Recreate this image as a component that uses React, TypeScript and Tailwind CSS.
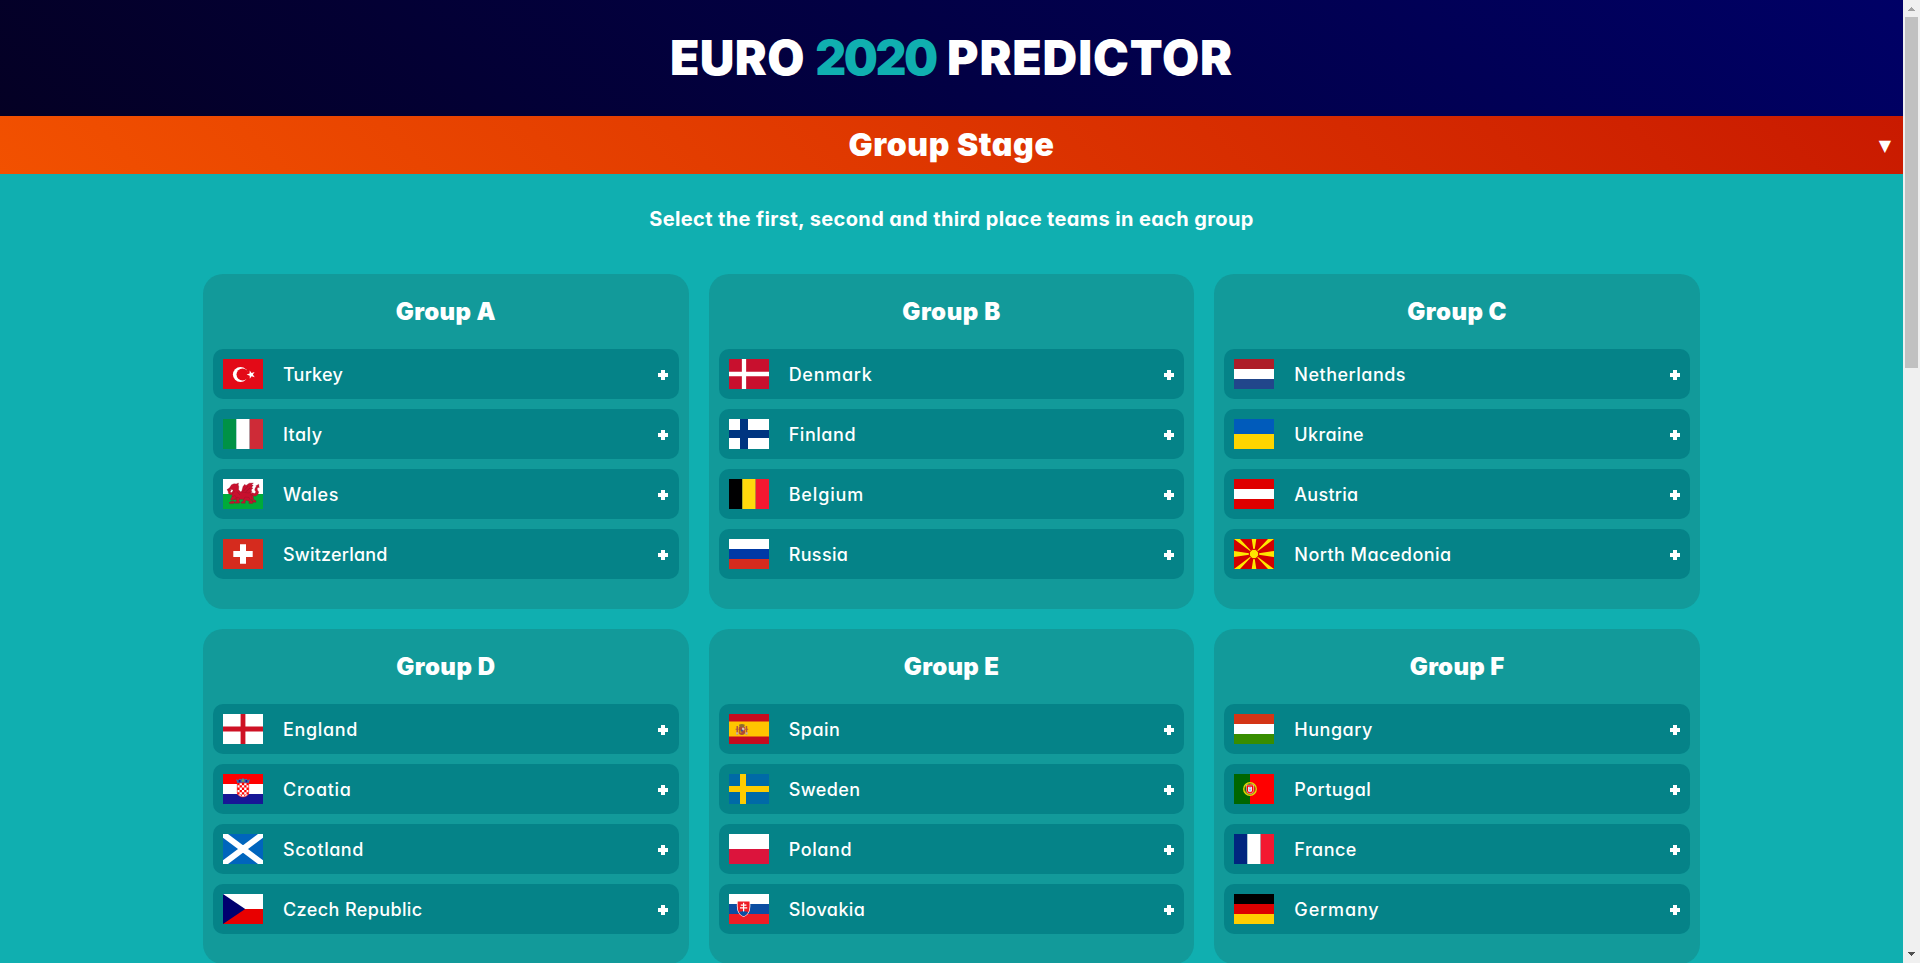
import type { ReactNode } from "react";

type Team = { name: string; tracking: string; flag: ReactNode };
type Group = { name: string; tracking: string; teams: Team[] };

const bandsH = (...colors: string[]) =>
  colors.map((c, i) => (
    <rect key={i} x="0" y={(30 / colors.length) * i} width="40" height={30 / colors.length} fill={c} />
  ));

const bandsV = (...colors: string[]) =>
  colors.map((c, i) => (
    <rect key={i} x={(40 / colors.length) * i} y="0" width={40 / colors.length} height="30" fill={c} />
  ));

const fill = (c: string) => <rect width="40" height="30" fill={c} />;

const turkey = (
  <>
    {fill("#e30a17")}
    <circle cx="17.5" cy="15.5" r="7.6" fill="#fff" />
    <circle cx="19.6" cy="15.5" r="6.1" fill="#e30a17" />
    <path
      fill="#fff"
      d="M23.600 15.600l3-1 .1-3.200 1.900 2.500 3-.9-1.700 2.600 1.800 2.600-3.100-.9-1.800 2.500-.1-3.100z"
    />
  </>
);

const wales = (
  <>
    {fill("#fff")}
    <rect y="15" width="40" height="15" fill="#00ab39" />
    <g fill="#c8102e" stroke="#8a1128" strokeWidth=".3">
      <path d="M8.500 5.800L11 4.700l2.200.2L15.500 4l-.3 2 .6 1.600-.2 3.200 2 1.900 7-1 3.500 1.500 1.500 3 .5 3-3 2.500-3-1-6.500-.5-4 .8-3-.8-1.500-2.500-.3-3 1.300-3-1-1.200-2.200.2-1.600 1.200-.9-1.600 2-1.300z" />
      <path d="M18.500 13l1.500-5.500 1.800-2.200 1.200 1.200 3.200-2.300 4.200-.2-1.800 1.800 1.600.4-1.500 2 1.200 1-1.800 1.800 1 1.500-3.500 1.500z" />
      <path d="M11.500 13l-3.500 3-2.500-1.500-.5-2.500-1-1.500 1.800.3.700-1.500.7 1.800 1 .2-.9 1.400.8 1 2.700-2z" />
      <path d="M12 16.500l-3 1.200-1.500 2.500 1 1 2.200-.6 2.800-1.600z" />
      <path d="M14 18l2.500 1-.5 2.800 1 1.200-.8 1.200H12l-.4-1 2-.9z" />
      <path d="M8 22.500l3-.5.5 1.800-.8.8H6.500l-.3-1z" />
      <path d="M22 18l4 .5 1.500 2.500 2.500 1.500-.3 2H26l-.3-1 1.200-.6-3.400-1.900-1.500 1.700.3 1.500h-4l-.2-1 1.700-.8z" />
      <path d="M27.500 15l2.500 2 .5 3.500 2.500 1.200v1.500h-3l-.3-1z" />
      <path d="M28.500 13.500l3 1 1.500-1.500-1.300-2 .6-2.300 1.200-.9-.8-.8 3-1.800.5 3.500-1-.4-1 1.200.2 1.400 1.300 2-.8 2.600-2.600 1.800-3-.8z" />
    </g>
    <path d="M20.500 12l4.500-5M22.500 13l4.500-4M14 12.500l3 3.500" stroke="#8a1128" strokeWidth=".5" />
  </>
);

const switzerland = (
  <>
    {fill("#d52b1e")}
    <path fill="#fff" d="M17 5.300h6v6.700h6.700v6h-6.700v6.700h-6v-6.700h-6.700v-6h6.700z" />
  </>
);

const denmark = (
  <>
    {fill("#c8102e")}
    <path fill="#fff" d="M12.860 0h4.280v30h-4.280zM0 12.860h40v4.280H0z" />
  </>
);

const finland = (
  <>
    {fill("#fff")}
    <path fill="#003580" d="M11 0h8v30h-8zM0 10.900h40v8.200H0z" />
  </>
);

const macedonia = (
  <>
    {fill("#d20000")}
    <path
      fill="#ffe600"
      d="M0 0h6l14 15zM40 0h-6L20 15zM0 30h6l14-15zM40 30h-6L20 15zM17.700 0h4.600L20 15zM17.700 30h4.600L20 15zM0 12v6l20-3zM40 12v6l-20-3z"
    />
    <circle cx="20" cy="15" r="4.7" fill="#ffe600" stroke="#d20000" strokeWidth="1" />
  </>
);

const england = (
  <>
    {fill("#fff")}
    <path fill="#ce1124" d="M17.600 0h4.800v30h-4.800zM0 12.600h40v4.800H0z" />
  </>
);

const croatia = (
  <>
    {bandsH("#ff0000", "#ffffff", "#171796")}
    <path fill="#fff" stroke="#ff0000" strokeWidth=".6" d="M14.300 9h11.400v9.500a5.700 4.500 0 0 1-11.400 0z" />
    <path
      fill="#ff0000"
      d="M14.300 9h2.300v2.300h-2.300zM18.900 9h2.300v2.300h-2.300zM23.500 9h2.200v2.300h-2.200zM16.600 11.300h2.300v2.300h-2.300zM21.200 11.300h2.300v2.300h-2.300zM14.300 13.600h2.300v2.300h-2.300zM18.900 13.600h2.300v2.300h-2.300zM23.500 13.600h2.200v2.300h-2.200zM16.600 15.900h2.300v2.300h-2.300zM21.200 15.900h2.300v2.300h-2.300zM14.300 18.200h2.300v2.300h-2.100zM18.900 18.200h2.300v2.300h-2.300zM23.500 18.200h2.200l-.2 2.300h-2zM16.800 20.500h2.100v2zM21.200 20.500h2l-2 2z"
    />
    <path fill="#3f6fa8" d="M13 5.300l2.200.7 1.500-1.200 1.700.5L20 4.100l1.600 1.200 1.700-.5 1.500 1.200 2.200-.7-1.300 3.700q-5.700-1.200-11.400 0z" />
    <path fill="#171796" d="M15.700 6h1.800v2.200h-1.800zM22.500 6h1.800v2.200h-1.800z" />
    <path fill="#8aa83a" d="M19.100 5.500h1.800v2h-1.800z" />
  </>
);

const scotland = (
  <>
    {fill("#0065bd")}
    <path stroke="#fff" strokeWidth="6" d="M0 0l40 30M40 0L0 30" />
  </>
);

const czech = (
  <>
    {bandsH("#ffffff", "#e80000")}
    <path fill="#00006f" d="M0 0l22.200 15L0 30z" />
  </>
);

const spain = (
  <>
    {fill("#c60b1e")}
    <rect y="7.5" width="40" height="15" fill="#ffc400" />
    <path fill="#b5533c" d="M7.500 12h1.500v8.500H7.500zM16.700 12h1.500v8.500h-1.500z" />
    <path fill="#c8b1a0" d="M7 18.300h2.400v2.200H7zM16.400 18.300h2.400v2.200h-2.400z" />
    <path fill="#b04a35" d="M9.800 13h6.200v5.300a3.100 2.700 0 0 1-6.200 0z" />
    <path fill="#8d6b2f" d="M10 10.800q2.900-1.800 5.800 0l-.6 2.200h-4.600z" />
    <path fill="#d9c6b0" d="M13 13.700h2.400v2.600H13z" />
    <path fill="#c58917" d="M10.500 16.500h2v2.600h-1.600z" />
    <circle cx="12.9" cy="16.5" r="1" fill="#41518f" />
    <path fill="#b5533c" d="M6.600 14.800h3v1h-3zM16.200 14.800h3v1h-3z" />
  </>
);

const sweden = (
  <>
    {fill("#006aa7")}
    <path fill="#fecc00" d="M11 0h6v30h-6zM0 12h40v6H0z" />
  </>
);

const slovakia = (
  <>
    {bandsH("#ffffff", "#0b4ea2", "#ee1c25")}
    <path fill="#fff" d="M8 6.900h13.200q.5 6-.3 9.200-1.200 4.800-6.300 7-5.100-2.200-6.300-7-.8-3.200-.3-9.200z" />
    <path fill="#ee1c25" d="M8.700 7.600h11.800q.4 5.500-.3 8.300-1.100 4.300-5.600 6.400-4.500-2.100-5.600-6.400-.7-2.800-.3-8.300z" />
    <path fill="#0b4ea2" d="M10.200 18.700q1-1.600 2.300-.9 2.100-2.300 4.200 0 1.300-.7 2.300.9-1.600 2.500-4.400 3.600-2.800-1.100-4.400-3.600z" />
    <path fill="#fff" d="M14 8.700h1.200v1.900h2.200v1.200h-2.200v1.500h3v1.300h-3v2.900H14v-2.900h-3v-1.300h3v-1.500h-2.200v-1.200H14z" />
  </>
);

const portugal = (
  <>
    {fill("#ff0000")}
    <rect width="16" height="30" fill="#006600" />
    <circle cx="16" cy="15" r="6.2" fill="none" stroke="#e6d800" strokeWidth="1.5" />
    <circle cx="16" cy="15" r="5.3" fill="none" stroke="#8a8a1c" strokeWidth=".8" />
    <path fill="#ff0000" stroke="#fff" strokeWidth=".5" d="M12.500 11h7v5.500a3.500 3.300 0 0 1-7 0z" />
    <path fill="#dfe6f5" d="M14 12.700h4v3.800a2 1.700 0 0 1-4 0z" />
    <path fill="#6f86c6" d="M15.500 13.300h1v1h-1zM15.500 15h1v1h-1zM15.500 16.600h1v.8h-1z" />
  </>
);

const groups: Group[] = [
  {
    name: "Group A",
    tracking: "tracking-[0.35px]",
    teams: [
      { name: "Turkey", tracking: "tracking-[0.2px]", flag: turkey },
      { name: "Italy", tracking: "tracking-[0.45px]", flag: bandsV("#009246", "#ffffff", "#ce2b37") },
      { name: "Wales", tracking: "tracking-[0.58px]", flag: wales },
      { name: "Switzerland", tracking: "tracking-[0.2px]", flag: switzerland },
    ],
  },
  {
    name: "Group B",
    tracking: "tracking-[0.55px]",
    teams: [
      { name: "Denmark", tracking: "tracking-[0.72px]", flag: denmark },
      { name: "Finland", tracking: "tracking-[0.55px]", flag: finland },
      { name: "Belgium", tracking: "tracking-[0.85px]", flag: bandsV("#000001", "#ffd90c", "#f31830") },
      { name: "Russia", tracking: "tracking-[0.35px]", flag: bandsH("#ffffff", "#0039a6", "#d52b1e") },
    ],
  },
  {
    name: "Group C",
    tracking: "tracking-[0.45px]",
    teams: [
      { name: "Netherlands", tracking: "tracking-[0.49px]", flag: bandsH("#ae1c28", "#ffffff", "#21468b") },
      { name: "Ukraine", tracking: "tracking-[0.38px]", flag: bandsH("#005bbb", "#ffd500") },
      { name: "Austria", tracking: "tracking-[0.26px]", flag: bandsH("#df0000", "#ffffff", "#df0000") },
      { name: "North Macedonia", tracking: "tracking-[0.45px]", flag: macedonia },
    ],
  },
  {
    name: "Group D",
    tracking: "tracking-[0.48px]",
    teams: [
      { name: "England", tracking: "tracking-[0.64px]", flag: england },
      { name: "Croatia", tracking: "tracking-[0.73px]", flag: croatia },
      { name: "Scotland", tracking: "tracking-[0.53px]", flag: scotland },
      { name: "Czech Republic", tracking: "tracking-[0.39px]", flag: czech },
    ],
  },
  {
    name: "Group E",
    tracking: "tracking-[0.3px]",
    teams: [
      { name: "Spain", tracking: "tracking-[0.49px]", flag: spain },
      { name: "Sweden", tracking: "tracking-[0.42px]", flag: sweden },
      { name: "Poland", tracking: "tracking-[0.6px]", flag: bandsH("#ffffff", "#dc143c") },
      { name: "Slovakia", tracking: "tracking-[0.38px]", flag: slovakia },
    ],
  },
  {
    name: "Group F",
    tracking: "tracking-[0.32px]",
    teams: [
      { name: "Hungary", tracking: "tracking-[0.5px]", flag: bandsH("#d43516", "#ffffff", "#388d00") },
      { name: "Portugal", tracking: "tracking-[0.44px]", flag: portugal },
      { name: "France", tracking: "tracking-[0.48px]", flag: bandsV("#00267f", "#ffffff", "#f31830") },
      { name: "Germany", tracking: "tracking-[0.85px]", flag: bandsH("#000000", "#dd0000", "#ffce00") },
    ],
  },
];

function TeamRow({ team }: { team: Team }) {
  return (
    <li className="flex h-[50px] items-center rounded-[10px] bg-[#058388] px-2.5">
      <svg viewBox="0 0 40 30" className="h-[30px] w-10 shrink-0 overflow-hidden">
        {team.flag}
      </svg>
      <span className={`ml-5 flex-1 pt-px text-lg leading-6 font-medium whitespace-nowrap ${team.tracking}`}>
        {team.name}
      </span>
      <svg viewBox="0 0 10 10" className="mt-0.5 mr-[0.3px] size-2.5 shrink-0" aria-label="Select">
        <path fill="#fff" d="M3 0h4v3h3v4H7v3H3V7H0V3h3z" />
      </svg>
    </li>
  );
}

function GroupCard({ group }: { group: Group }) {
  return (
    <section className="h-[335px] rounded-[20px] bg-[#129a9a] px-2.5">
      <h3 className={`flex h-[75px] items-center justify-center text-2xl font-black whitespace-nowrap ${group.tracking}`}>
        {group.name}
      </h3>
      <ul className="flex flex-col gap-2.5">
        {group.teams.map((t) => (
          <TeamRow key={t.name} team={t} />
        ))}
      </ul>
    </section>
  );
}

function Scrollbar() {
  return (
    <div className="flex w-[17px] shrink-0 flex-col items-center bg-[#f0f0f0]">
      <svg viewBox="0 0 17 17" className="size-[17px] shrink-0">
        <path fill="#a3a3a3" d="M5 11h7v-1h-1V9h-1V8H9V7H8v1H7v1H6v1H5z" />
      </svg>
      <div className="h-[351px] w-[13px] bg-[#c1c1c1]" />
      <svg viewBox="0 0 17 17" className="mt-auto size-[17px] shrink-0">
        <path fill="#505050" d="M5 6h7v1h-1v1h-1v1H9v1H8V9H7V8H6V7H5z" />
      </svg>
    </div>
  );
}

export default function App() {
  return (
    <div className="flex h-[963px] w-full overflow-hidden bg-[#10afb0] font-['Inter','Noto_Sans',sans-serif] text-white [font-feature-settings:'cv11']">
      <main className="min-w-0 flex-1">
        <header className="flex h-[116px] items-center justify-center bg-[linear-gradient(45deg,#040024,#000066)]">
          <h1 className="pb-px text-5xl font-black whitespace-nowrap">
            <span className="tracking-[0.3px]">EURO</span>{" "}
            <span className="ml-px tracking-[-2.5px] text-[#10afb0]">2020</span>{" "}
            <span className="ml-0.5 tracking-[0.85px]">PREDICTOR</span>
          </h1>
        </header>
        <div className="grid h-[58px] grid-cols-[1fr_auto_1fr] items-center bg-[linear-gradient(45deg,#f25100,#c91a00)]">
          <h2 className="col-start-2 text-[32px] leading-10 font-black tracking-[0.58px]">Group Stage</h2>
          <span className="mt-0.5 mr-3 justify-self-end font-['DejaVu_Sans',sans-serif] text-base leading-none">▼</span>
        </div>
        <p className="flex h-[100px] items-center justify-center pb-2.5 text-xl font-[650] tracking-[0.38px]">
          Select the first, second and third place teams in each group
        </p>
        <div className="mx-auto grid w-[1497px] grid-cols-3 gap-5">
          {groups.map((g) => (
            <GroupCard key={g.name} group={g} />
          ))}
        </div>
      </main>
      <Scrollbar />
    </div>
  );
}
